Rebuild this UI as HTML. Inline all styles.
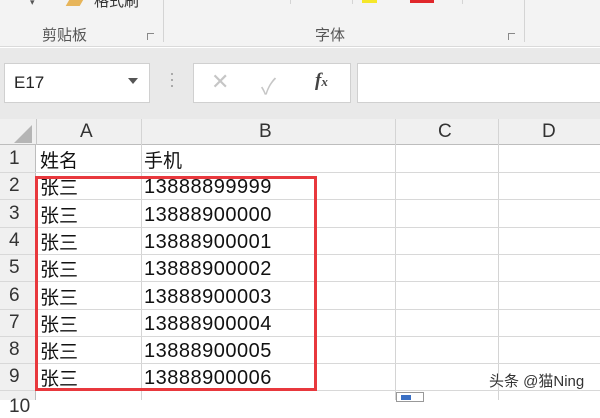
<!DOCTYPE html>
<html><head><meta charset="utf-8"><style>
*{margin:0;padding:0;box-sizing:border-box}
body{width:600px;height:400px;overflow:hidden;background:#fff;font-family:"Liberation Sans","Noto Sans CJK SC",sans-serif;position:relative}
.a{position:absolute}
.ct{font-family:"Liberation Sans","Noto Sans CJK SC",sans-serif}
</style></head><body>
<div class="a" style="left:0;top:0;width:600px;height:47px;background:#f3f3f3;border-bottom:1px solid #dadada"></div>
<div class="a" style="left:163px;top:0;width:1px;height:42px;background:#d4d4d4"></div>
<div class="a" style="left:524px;top:0;width:1px;height:42px;background:#d4d4d4"></div>
<div class="a" style="left:290px;top:0;width:1px;height:4px;background:#d4d4d4"></div>
<div class="a" style="left:352px;top:0;width:1px;height:4px;background:#d4d4d4"></div>
<div class="a" style="left:462px;top:0;width:1px;height:4px;background:#d4d4d4"></div>
<div class="a" style="left:362px;top:0;width:15px;height:3px;background:#f5e72a"></div>
<div class="a" style="left:410px;top:0;width:24px;height:3px;background:#e0262a"></div>
<div class="a" style="left:30px;top:-3px;font-size:9px;color:#555">▾</div>
<div class="a" style="left:68px;top:-2px;width:14px;height:8px;background:#e7b55a;transform:skewX(-30deg)"></div>
<div class="a ct" style="left:94px;top:-10px;font-size:15px;color:#333">格式刷</div>
<div class="a ct" style="left:42px;top:24px;font-size:15px;color:#555">剪贴板</div>
<div class="a ct" style="left:315px;top:24px;font-size:15px;color:#555">字体</div>
<div class="a" style="left:147px;top:33px;width:7px;height:7px;border-left:1px solid #888;border-top:1px solid #888"></div>
<div class="a" style="left:508px;top:33px;width:7px;height:7px;border-left:1px solid #888;border-top:1px solid #888"></div>
<div class="a" style="left:0;top:48px;width:600px;height:72px;background:#e9e9e9"></div>
<div class="a" style="left:4px;top:63px;width:146px;height:40px;background:#fff;border:1px solid #d0d0d0"></div>
<div class="a" style="left:14px;top:73px;font-size:17px;color:#222">E17</div>
<div class="a" style="left:128px;top:78px;width:0;height:0;border-left:5px solid transparent;border-right:5px solid transparent;border-top:6px solid #555"></div>
<div class="a" style="left:171px;top:73px;width:2px;height:2px;background:#aaa;box-shadow:0 6px #aaa,0 12px #aaa"></div>
<div class="a" style="left:193px;top:63px;width:158px;height:40px;background:#fff;border:1px solid #d0d0d0"></div>
<div class="a" style="left:211px;top:69px;font-size:22px;color:#c6c6c6">✕</div>
<div class="a" style="left:261px;top:69px;font-size:22px;color:#c6c6c6">✓</div>
<div class="a" style="left:315px;top:70px;font-size:19px;color:#444;font-family:'Liberation Serif',serif;font-style:italic;font-weight:bold">f<span style="font-size:13px">x</span></div>
<div class="a" style="left:357px;top:63px;width:250px;height:40px;background:#fff;border:1px solid #d0d0d0"></div>
<div class="a" style="left:0;top:119px;width:600px;height:26px;background:#f0f0f0;border-bottom:1px solid #bdbdbd"></div>
<div class="a" style="left:0;top:145px;width:36px;height:255px;background:#f0f0f0;border-right:1px solid #bdbdbd"></div>
<div class="a" style="left:14px;top:125px;width:0;height:0;border-left:18px solid transparent;border-bottom:18px solid #b5b5b5"></div>
<div class="a" style="left:36px;top:119px;width:1px;height:26px;background:#c8c8c8"></div>
<div class="a" style="left:141px;top:119px;width:1px;height:281px;background:#d4d4d4"></div>
<div class="a" style="left:395px;top:119px;width:1px;height:281px;background:#d4d4d4"></div>
<div class="a" style="left:498px;top:119px;width:1px;height:281px;background:#d4d4d4"></div>
<div class="a" style="left:80px;top:121px;font-size:19px;color:#333">A</div>
<div class="a" style="left:259px;top:121px;font-size:19px;color:#333">B</div>
<div class="a" style="left:438px;top:121px;font-size:19px;color:#333">C</div>
<div class="a" style="left:542px;top:121px;font-size:19px;color:#333">D</div>
<div id="rows"></div>
<script>
var h='',names=['姓名','张三','张三','张三','张三','张三','张三','张三','张三'],nums=['手机','13888899999','13888900000','13888900001','13888900002','13888900003','13888900004','13888900005','13888900006'];
for(var i=0;i<9;i++){var t=145+i*27.3;
h+='<div class="a" style="left:0;top:'+(t+27)+'px;width:600px;height:1px;background:#d8d8d8"></div>';
h+='<div class="a" style="left:9px;top:'+(t+3)+'px;font-size:19px;color:#333">'+(i+1)+'</div>';
h+='<div class="a ct" style="left:40px;top:'+(t+1)+'px;font-size:19px;color:#111">'+names[i]+'</div>';
h+='<div class="a ct" style="left:144px;top:'+(t+(i?4:1))+'px;font-size:'+(i?20:19)+'px;letter-spacing:'+(i?0.5:0)+'px;color:#111">'+nums[i]+'</div>';}
h+='<div class="a" style="left:9px;top:396px;font-size:19px;color:#333">10</div>';
document.getElementById('rows').innerHTML=h;
</script>
<div class="a" style="left:35px;top:176px;width:282px;height:215px;border:3px solid #e8383d"></div>
<div class="a" style="left:396px;top:392px;width:28px;height:10px;border:1px solid #999;background:#fff"></div>
<div class="a" style="left:401px;top:395px;width:10px;height:5px;background:#3a6fc4"></div>
<div class="a ct" style="left:489px;top:370px;font-size:15px;color:#333;text-shadow:0 0 2px #fff,0 0 2px #fff">头条 @猫Ning</div>
</body></html>
